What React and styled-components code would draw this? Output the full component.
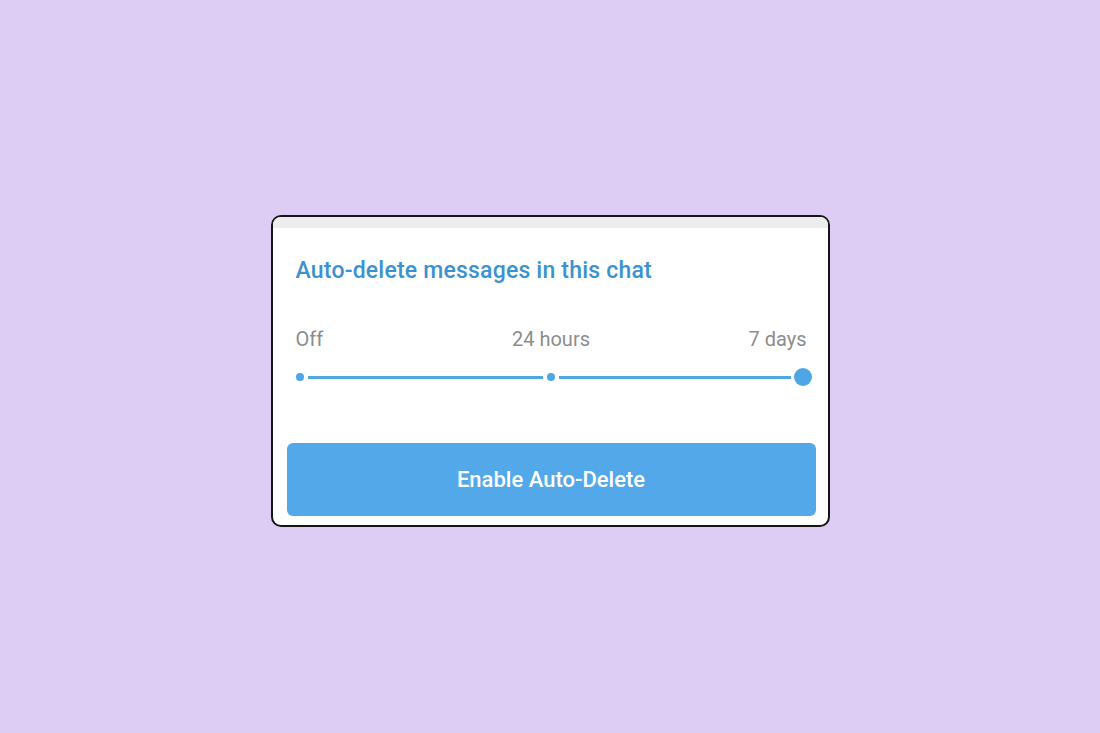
import styled, { createGlobalStyle } from "styled-components";

const GlobalStyle = createGlobalStyle`
  html, body {
    margin: 0;
    padding: 0;
    background: #ddcdf5;
  }
  body {
    font-family: Roboto, "Noto Sans", "Liberation Sans", sans-serif;
  }
`;

const Page = styled.div`
  min-height: 733px;
  display: flex;
  justify-content: center;
  align-items: center;
  padding-top: 9px;
  box-sizing: border-box;
`;

const Card = styled.div`
  width: 559px;
  height: 312px;
  box-sizing: border-box;
  background: #ffffff;
  border: 2px solid #151515;
  border-radius: 10px;
  overflow: hidden;
  display: flex;
  flex-direction: column;
`;

const TopStrip = styled.div`
  height: 11px;
  background: #ededed;
  flex-shrink: 0;
`;

const Body = styled.div`
  display: flex;
  flex-direction: column;
  padding: 0 12px 0 14px;
  flex: 1;
`;

const Section = styled.div`
  padding: 0 4px 0 9px;
`;

const Title = styled.h2`
  margin: 29px 0 0;
  font-size: 23px;
  font-weight: 500;
  line-height: 28px;
  color: #3a93d0;
  letter-spacing: 0.2px;
`;

const Labels = styled.div`
  display: grid;
  grid-template-columns: 1fr auto 1fr;
  margin-top: 42px;
  padding-right: 5px;
  font-size: 20px;
  line-height: 24px;
  color: #8b8d90;

  & > span:nth-child(2) {
    text-align: center;
  }
  & > span:last-child {
    text-align: right;
  }
`;

const Track = styled.div`
  display: flex;
  align-items: center;
  height: 20px;
  margin-top: 16px;
`;

const Dot = styled.span`
  width: ${(p) => p.$size}px;
  height: ${(p) => p.$size}px;
  border-radius: 50%;
  background: #4fa6e6;
  flex-shrink: 0;
`;

const Segment = styled.span`
  flex: ${(p) => p.$grow} 1 0;
  height: 3px;
  background: #4fa6e6;
  margin: 0 ${(p) => p.$right || 4}px 0 4px;
`;

const Button = styled.button`
  margin-top: 56px;
  height: 73px;
  border: none;
  border-radius: 6px;
  background: #52a8e8;
  color: #ffffff;
  font-family: inherit;
  font-size: 22px;
  font-weight: 500;
  cursor: pointer;
`;

export default function App() {
  return (
    <>
      <GlobalStyle />
      <Page>
        <Card>
          <TopStrip />
          <Body>
            <Section>
              <Title>Auto-delete messages in this chat</Title>
              <Labels>
                <span>Off</span>
                <span>24 hours</span>
                <span>7 days</span>
              </Labels>
              <Track>
                <Dot $size={8} />
                <Segment $grow={235} />
                <Dot $size={8} />
                <Segment $grow={231} $right={3} />
                <Dot $size={18} />
              </Track>
            </Section>
            <Button>Enable Auto-Delete</Button>
          </Body>
        </Card>
      </Page>
    </>
  );
}
